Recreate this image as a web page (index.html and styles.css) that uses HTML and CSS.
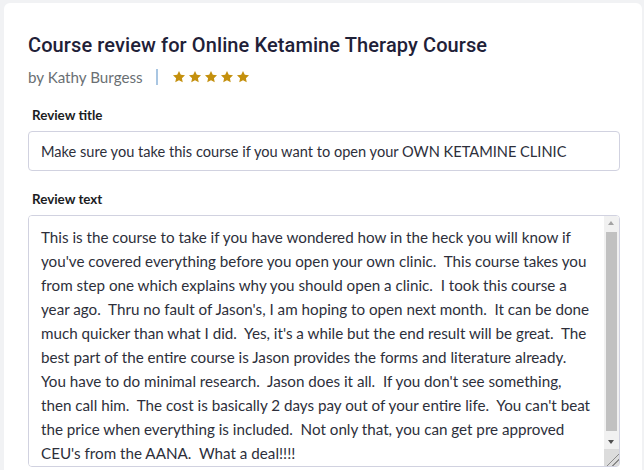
FILE: index.html
```html
<!DOCTYPE html>
<html lang="en">
<head>
  <meta charset="UTF-8">
  <title>Course review</title>
  <link rel="stylesheet" href="styles.css">
</head>
<body>
  <div class="review-card">
    <h2 class="review-heading">Course review for Online Ketamine Therapy Course</h2>
    <div class="review-meta">
      <span class="review-author">by Kathy Burgess</span>
      <span class="review-sep"></span>
      <span class="review-stars" aria-label="5 stars">
        <svg viewBox="0 0 24 24"><path d="M12 1.5l3.1 6.6 7.2.9-5.3 5 1.4 7.2L12 17.7l-6.4 3.5L7 14l-5.3-5 7.2-.9z"/></svg>
        <svg viewBox="0 0 24 24"><path d="M12 1.5l3.1 6.6 7.2.9-5.3 5 1.4 7.2L12 17.7l-6.4 3.5L7 14l-5.3-5 7.2-.9z"/></svg>
        <svg viewBox="0 0 24 24"><path d="M12 1.5l3.1 6.6 7.2.9-5.3 5 1.4 7.2L12 17.7l-6.4 3.5L7 14l-5.3-5 7.2-.9z"/></svg>
        <svg viewBox="0 0 24 24"><path d="M12 1.5l3.1 6.6 7.2.9-5.3 5 1.4 7.2L12 17.7l-6.4 3.5L7 14l-5.3-5 7.2-.9z"/></svg>
        <svg viewBox="0 0 24 24"><path d="M12 1.5l3.1 6.6 7.2.9-5.3 5 1.4 7.2L12 17.7l-6.4 3.5L7 14l-5.3-5 7.2-.9z"/></svg>
      </span>
    </div>

    <label class="field-label" for="reviewTitle">Review title</label>
    <input class="field-input" id="reviewTitle" type="text" value="Make sure you take this course if you want to open your OWN KETAMINE CLINIC">

    <label class="field-label" for="reviewText">Review text</label>
    <div class="textarea-wrap">
      <textarea class="field-textarea" id="reviewText">This is the course to take if you have wondered how in the heck you will know if
you've covered everything before you open your own clinic.  This course takes you
from step one which explains why you should open a clinic.  I took this course a
year ago.  Thru no fault of Jason's, I am hoping to open next month.  It can be done
much quicker than what I did.  Yes, it's a while but the end result will be great.  The
best part of the entire course is Jason provides the forms and literature already.
You have to do minimal research.  Jason does it all.  If you don't see something,
then call him.  The cost is basically 2 days pay out of your entire life.  You can't beat
the price when everything is included.  Not only that, you can get pre approved
CEU's from the AANA.  What a deal!!!!</textarea>
      <!-- scrollbar drawn by hand, headless shows none -->
      <div class="fake-scrollbar">
        <span class="sb-btn sb-up"></span>
        <span class="sb-track"><span class="sb-thumb"></span></span>
        <span class="sb-btn sb-down"></span>
        <span class="sb-corner"></span>
      </div>
    </div>
  </div>
</body>
</html>
```

FILE: styles.css
```css
html, body {
  overflow: hidden;
}
body {
  margin: 0;
  padding: 3px 2px 0 4px;
  background: #f1f2f4;
  font-family: Lato, 'Liberation Sans', sans-serif;
  color: #2d2f3b;
}
.review-card {
  background: #fff;
  border-radius: 6px;
  padding: 29px 22px 0 24px;
  height: 480px;
  box-sizing: border-box;
}
.review-heading {
  margin: 0;
  font-family: Roboto, sans-serif;
  font-weight: 500;
  font-size: 20px;
  line-height: 26px;
  color: #1f2138;
  letter-spacing: 0.1px;
}
.review-meta {
  display: flex;
  align-items: center;
  margin-top: 9px;
  height: 20px;
}
.review-author {
  font-size: 15.2px;
  color: #6a6f73;
}
.review-sep {
  width: 2px;
  height: 16px;
  background: #a9c6e2;
  margin: 0 14px 0 13px;
}
.review-stars {
  display: flex;
  gap: 2px;
}
.review-stars svg {
  width: 14px;
  height: 14px;
  fill: #c4900e;
}
.field-label {
  display: block;
  margin: 20px 0 8px 4px;
  font-size: 13.4px;
  font-weight: 700;
  color: #1c1d1f;
}
.field-input, .field-textarea {
  display: block;
  width: 100%;
  box-sizing: border-box;
  border: 1px solid #d1d2e0;
  border-radius: 4px;
  font-family: inherit;
  color: #2d2f3b;
  background: #fff;
  outline: none;
}
.field-input {
  height: 40px;
  padding: 0 12px;
  font-size: 14.6px;
}
.textarea-wrap {
  position: relative;
}
.field-textarea {
  height: 252px;
  padding: 9px 20px 9px 12px;
  font-size: 15.2px;
  line-height: 24px;
  resize: none;
  overflow-y: scroll;
  scrollbar-width: none;
  white-space: pre;
}
.fake-scrollbar {
  position: absolute;
  top: 1px;
  right: 1px;
  bottom: 1px;
  width: 15px;
  display: flex;
  flex-direction: column;
  background: #f1f1f1;
  border-top-right-radius: 3px;
  border-bottom-right-radius: 3px;
}
.sb-btn {
  height: 15px;
  position: relative;
}
.sb-btn::after {
  content: '';
  position: absolute;
  left: 4px;
  border-left: 3.5px solid transparent;
  border-right: 3.5px solid transparent;
}
.sb-up::after {
  top: 5px;
  border-bottom: 4px solid #a3a3a3;
}
.sb-down::after {
  top: 6px;
  border-top: 4px solid #505050;
}
.sb-track {
  flex: 1;
  padding: 1px 2px 3px;
  display: flex;
}
.sb-thumb {
  flex: 1;
  background: #c1c1c1;
}
.sb-corner {
  height: 17px;
  background: #dcdcdc linear-gradient(135deg, transparent 60%, #8a8a8a 60%, #8a8a8a 64%, transparent 64%, transparent 78%, #8a8a8a 78%, #8a8a8a 82%, transparent 82%);
}
```
